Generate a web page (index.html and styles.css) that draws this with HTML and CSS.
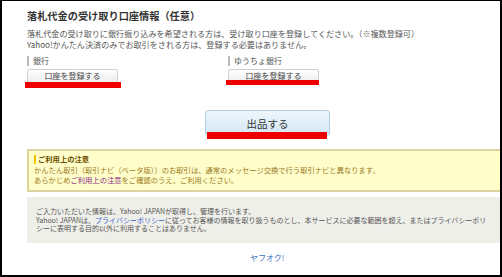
FILE: index.html
```html
<!DOCTYPE html>
<html lang="ja">
<head>
  <meta charset="UTF-8">
  <title>落札代金の受け取り口座情報</title>
  <link rel="stylesheet" href="styles.css">
</head>
<body>
  <div class="frame">
    <div class="content">
      <h3 class="title">落札代金の受け取り口座情報（任意）</h3>
      <p class="lead">落札代金の受け取りに銀行振り込みを希望される方は、受け取り口座を登録してください。（※複数登録可）<br>Yahoo!かんたん決済のみでお取引をされる方は、登録する必要はありません。</p>

      <div class="accounts">
        <div class="account">
          <div class="label">銀行</div>
          <button class="btn">口座を登録する<span class="mark mark-a"></span></button>
        </div>
        <div class="account">
          <div class="label">ゆうちょ銀行</div>
          <button class="btn">口座を登録する<span class="mark mark-b"></span></button>
        </div>
      </div>

      <div class="submit-row">
        <button class="submit">出品する<span class="mark mark-c"></span></button>
      </div>

      <div class="notice">
        <div class="notice-title">ご利用上の注意</div>
        <p>かんたん取引（取引ナビ（ベータ版））のお取引は、通常のメッセージ交換で行う取引ナビと異なります。<br>あらかじめ<a href="#" class="visited">ご利用上の注意</a>をご確認のうえ、ご利用ください。</p>
      </div>

      <div class="privacy">
        <p>ご入力いただいた情報は、Yahoo! JAPANが取得し、管理を行います。<br>Yahoo! JAPANは、<a href="#">プライバシーポリシー</a>に従ってお客様の情報を取り扱うものとし、本サービスに必要な範囲を超え、またはプライバシーポリ<br>シーに表明する目的以外に利用することはありません。</p>
      </div>

      <div class="footer"><a href="#">ヤフオク!</a></div>
    </div>
  </div>
</body>
</html>
```

FILE: styles.css
```css
body {
  margin: 0;
  font-family: "Noto Sans CJK JP", "Noto Sans", sans-serif;
  color: #444;
  background: #fff;
}

.frame {
  width: 502px;
  height: 277px;
  box-sizing: border-box;
  border-style: solid;
  border-color: #000;
  border-width: 1px 2px 2px 2px;
  overflow: hidden;
}

.content {
  padding: 9px 0 0 25px;
  width: 520px;
}

.title {
  margin: 0;
  font-size: 10.2px;
  line-height: 12px;
  font-weight: bold;
  color: #333;
}

.lead {
  margin: 6px 0 0;
  font-size: 8.1px;
  line-height: 11px;
  color: #555;
}

.accounts {
  display: flex;
  margin-top: 6px;
}

.account {
  width: 201px;
}

.label {
  font-size: 8px;
  line-height: 10px;
  color: #555;
  border-left: 2px solid #bbb;
  padding-left: 4px;
}

.btn {
  position: relative;
  display: block;
  margin-top: 3px;
  width: 91px;
  height: 14px;
  padding: 0;
  font-family: inherit;
  font-size: 8px;
  line-height: 12px;
  color: #444;
  background: linear-gradient(#fff, #ececec);
  border: 1px solid #d0d0d0;
  border-radius: 2px;
}

.mark {
  position: absolute;
  background: #ee0000;
}

.mark-a {
  left: -3px;
  top: 12px;
  width: 96px;
  height: 6px;
}

.mark-b {
  left: -3px;
  top: 10px;
  width: 93px;
  height: 5px;
}

.mark-c {
  left: 1px;
  top: 21px;
  width: 120px;
  height: 7px;
}

.submit-row {
  margin-top: 27px;
  padding-left: 178px;
}

.submit {
  position: relative;
  display: block;
  width: 125px;
  height: 26px;
  padding: 0;
  font-family: inherit;
  font-size: 10.5px;
  color: #333;
  background: linear-gradient(#eef6fb, #d3e7f4);
  border: 1px solid #b2cfe2;
  border-radius: 3px;
}

.notice {
  margin-top: 13px;
  height: 43px;
  box-sizing: border-box;
  background: #fffdc9;
  border: 2px solid #dcd49c;
  padding: 4px 0 0 5px;
  font-size: 7.3px;
  color: #9a7a1e;
}

.notice-title {
  font-weight: bold;
  color: #6b4e00;
  line-height: 9px;
  border-left: 2px solid #f2c200;
  padding-left: 2px;
}

.notice p {
  margin: 1px 0 0;
  line-height: 10px;
}

.notice a.visited {
  color: #8a2c8a;
  text-decoration: none;
}

.privacy {
  margin-top: 5px;
  height: 46px;
  box-sizing: border-box;
  background: #efefea;
  padding: 10px 0 0 9px;
  font-size: 7px;
  color: #555;
}

.privacy p {
  margin: 0;
  line-height: 8.7px;
}

.privacy a {
  color: #3a5fc8;
  text-decoration: none;
}

.footer {
  margin-top: 10px;
  padding-left: 223px;
  font-size: 8px;
  line-height: 10px;
}

.footer a {
  color: #3a6fc0;
  text-decoration: none;
}
```
